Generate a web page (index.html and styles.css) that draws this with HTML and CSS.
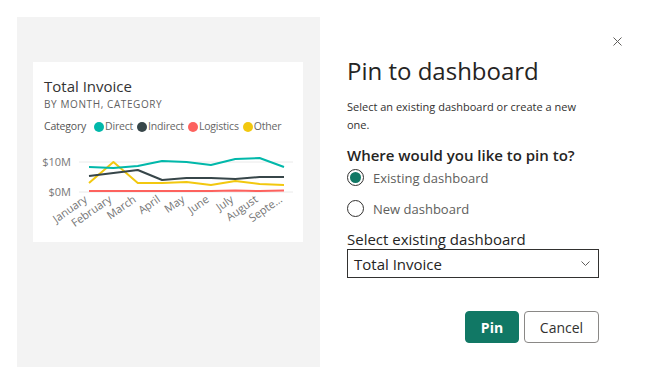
FILE: index.html
```html
<!DOCTYPE html>
<html lang="en">
<head>
<meta charset="utf-8">
<title>Pin to dashboard</title>
<link rel="stylesheet" href="styles.css">
</head>
<body>
<div class="layout">
  <section class="preview">
    <div class="card">
      <div class="card-head">
        <h2 class="card-title">Total Invoice</h2>
        <div class="card-sub">BY MONTH, CATEGORY</div>
        <div class="legend">
          <span class="legend-label">Category</span>
          <span class="legend-item"><i class="swatch sw-direct"></i>Direct</span>
          <span class="legend-item"><i class="swatch sw-indirect"></i>Indirect</span>
          <span class="legend-item"><i class="swatch sw-logistics"></i>Logistics</span>
          <span class="legend-item"><i class="swatch sw-other"></i>Other</span>
        </div>
      </div>
      <svg class="chart" width="270" height="105" viewBox="0 0 270 105">
        <line class="grid" x1="46" y1="25" x2="260" y2="25"/>
        <line class="grid" x1="46" y1="55" x2="260" y2="55"/>
        <text class="ylab" x="38" y="29">$10M</text>
        <text class="ylab" x="38" y="59">$0M</text>
        <polyline class="ln ln-logistics" points="56,54 80.4,54 104.8,54 129.1,54 153.5,54 177.9,54 202.3,53.5 226.6,54 251,53.5"/>
        <polyline class="ln ln-other" points="56,46 80.4,25 104.8,46 129.1,46 153.5,45 177.9,48 202.3,44 226.6,47 251,48"/>
        <polyline class="ln ln-indirect" points="56,39 80.4,36 104.8,33 129.1,43 153.5,41 177.9,41 202.3,42 226.6,40 251,40"/>
        <polyline class="ln ln-direct" points="56,30 80.4,31 104.8,29 129.1,24 153.5,25 177.9,28 202.3,22 226.6,21 251,30"/>
        <g class="xlab">
          <text transform="translate(55,64) rotate(-35)">January</text>
          <text transform="translate(79.4,64) rotate(-35)">February</text>
          <text transform="translate(103.8,64) rotate(-35)">March</text>
          <text transform="translate(128.1,64) rotate(-35)">April</text>
          <text transform="translate(152.5,64) rotate(-35)">May</text>
          <text transform="translate(176.9,64) rotate(-35)">June</text>
          <text transform="translate(201.3,64) rotate(-35)">July</text>
          <text transform="translate(225.6,64) rotate(-35)">August</text>
          <text transform="translate(250,64) rotate(-35)">Septe…</text>
        </g>
      </svg>
    </div>
  </section>
  <section class="dialog">
    <button class="close" aria-label="Close">
      <svg width="9" height="9" viewBox="0 0 9 9"><path d="M0.5 0.5 L8.5 8.5 M8.5 0.5 L0.5 8.5" stroke="#605e5c" stroke-width="1" fill="none"/></svg>
    </button>
    <h1 class="title">Pin to dashboard</h1>
    <p class="desc">Select an existing dashboard or create a new one.</p>
    <div class="question">Where would you like to pin to?</div>
    <label class="radio"><span class="radio-circle checked"></span>Existing dashboard</label>
    <label class="radio"><span class="radio-circle"></span>New dashboard</label>
    <div class="field-label">Select existing dashboard</div>
    <div class="select">
      <span class="select-value">Total Invoice</span>
      <svg class="chev" width="9" height="5" viewBox="0 0 9 5"><path d="M0.5 0.5 L4.5 4.5 L8.5 0.5" stroke="#605e5c" stroke-width="1" fill="none"/></svg>
    </div>
    <div class="actions">
      <button class="btn btn-primary">Pin</button>
      <button class="btn btn-default">Cancel</button>
    </div>
  </section>
</div>
</body>
</html>
```
FILE: styles.css
```css
* { box-sizing: border-box; }
html, body { margin: 0; padding: 0; background: #ffffff; }
body {
  font-family: "Segoe UI", "Open Sans", sans-serif;
  color: #252423;
  width: 654px;
  height: 383px;
  overflow: hidden;
}
.layout { display: flex; align-items: flex-start; }

/* left preview */
.preview {
  margin: 17px 0 0 17px;
  width: 303px;
  height: 350px;
  background: #f3f3f3;
  padding: 45px 17px 0 16px;
  flex: none;
}
.card {
  width: 270px;
  height: 180px;
  background: #ffffff;
}
.card-head {
  height: 75px;
  padding: 14px 11px 0 11px;
}
.card-title {
  margin: 0;
  font-size: 15px;
  font-weight: 400;
  line-height: 20px;
  color: #333333;
}
.card-sub {
  font-size: 10px;
  line-height: 14px;
  letter-spacing: 0.6px;
  color: #5f5f5f;
  margin-top: 1px;
}
.legend {
  margin-top: 8px;
  display: flex;
  align-items: center;
  font-size: 10.5px;
  line-height: 15px;
  color: #666666;
  white-space: nowrap;
  letter-spacing: -0.2px;
}
.legend-label { color: #555555; margin-right: 8px; }
.legend-item { display: flex; align-items: center; margin-right: 4px; }
.swatch {
  display: inline-block;
  width: 10px;
  height: 10px;
  border-radius: 50%;
  margin-right: 1px;
}
.sw-direct { background: #01b8aa; }
.sw-indirect { background: #374649; }
.sw-logistics { background: #fd625e; }
.sw-other { background: #f2c80f; }

.chart { display: block; }
.grid { stroke: #eaeaea; stroke-width: 1; }
.ylab { font-family: "Segoe UI", "Open Sans", sans-serif; font-size: 11px; fill: #777777; text-anchor: end; }
.xlab text { font-family: "Segoe UI", "Open Sans", sans-serif; font-size: 11px; fill: #777777; text-anchor: end; }
.ln { fill: none; stroke-width: 2; stroke-linejoin: round; }
.ln-direct { stroke: #01b8aa; }
.ln-indirect { stroke: #374649; }
.ln-logistics { stroke: #fd625e; }
.ln-other { stroke: #f2c80f; }

/* dialog */
.dialog {
  flex: 1;
  padding: 0 32px 0 27px;
  display: flex;
  flex-direction: column;
}
.close {
  align-self: flex-end;
  margin-top: 37px;
  width: 9px;
  height: 9px;
  padding: 0;
  border: none;
  background: none;
  display: flex;
}
.title {
  margin: 9px 0 0 0;
  font-size: 24px;
  font-weight: 400;
  line-height: 32px;
  color: #252423;
}
.desc {
  margin: 11px 0 0 0;
  width: 252px;
  font-size: 11px;
  line-height: 18px;
  color: #323130;
}
.question {
  margin-top: 11px;
  font-size: 15px;
  font-weight: 600;
  line-height: 20px;
  color: #252423;
}
.radio {
  display: flex;
  align-items: center;
  height: 25px;
  font-size: 13px;
  color: #605e5c;
}
.radio + .radio { margin-top: 6px; }
.radio-circle {
  width: 17px;
  height: 17px;
  border: 1px solid #323130;
  border-radius: 50%;
  margin-right: 9px;
  display: flex;
  align-items: center;
  justify-content: center;
}
.radio-circle.checked::after {
  content: "";
  width: 11px;
  height: 11px;
  border-radius: 50%;
  background: #117865;
}
.field-label {
  margin-top: 8px;
  font-size: 15px;
  line-height: 20px;
  color: #252423;
}
.select {
  width: 252px;
  height: 29px;
  border: 1px solid #323130;
  display: flex;
  align-items: center;
  justify-content: space-between;
  padding: 0 8px 0 6px;
}
.select-value { font-size: 15px; color: #252423; }
.chev { display: block; }
.actions {
  width: 252px;
  margin-top: 33px;
  display: flex;
  justify-content: flex-end;
  gap: 5px;
}
.btn {
  height: 32px;
  border-radius: 4px;
  font-family: "Segoe UI", "Open Sans", sans-serif;
  font-size: 14px;
  padding: 0;
}
.btn-primary {
  width: 54px;
  background: #117865;
  border: 1px solid #117865;
  color: #ffffff;
  font-weight: 700;
}
.btn-default {
  width: 75px;
  background: #ffffff;
  border: 1px solid #8a8886;
  color: #323130;
}
```
